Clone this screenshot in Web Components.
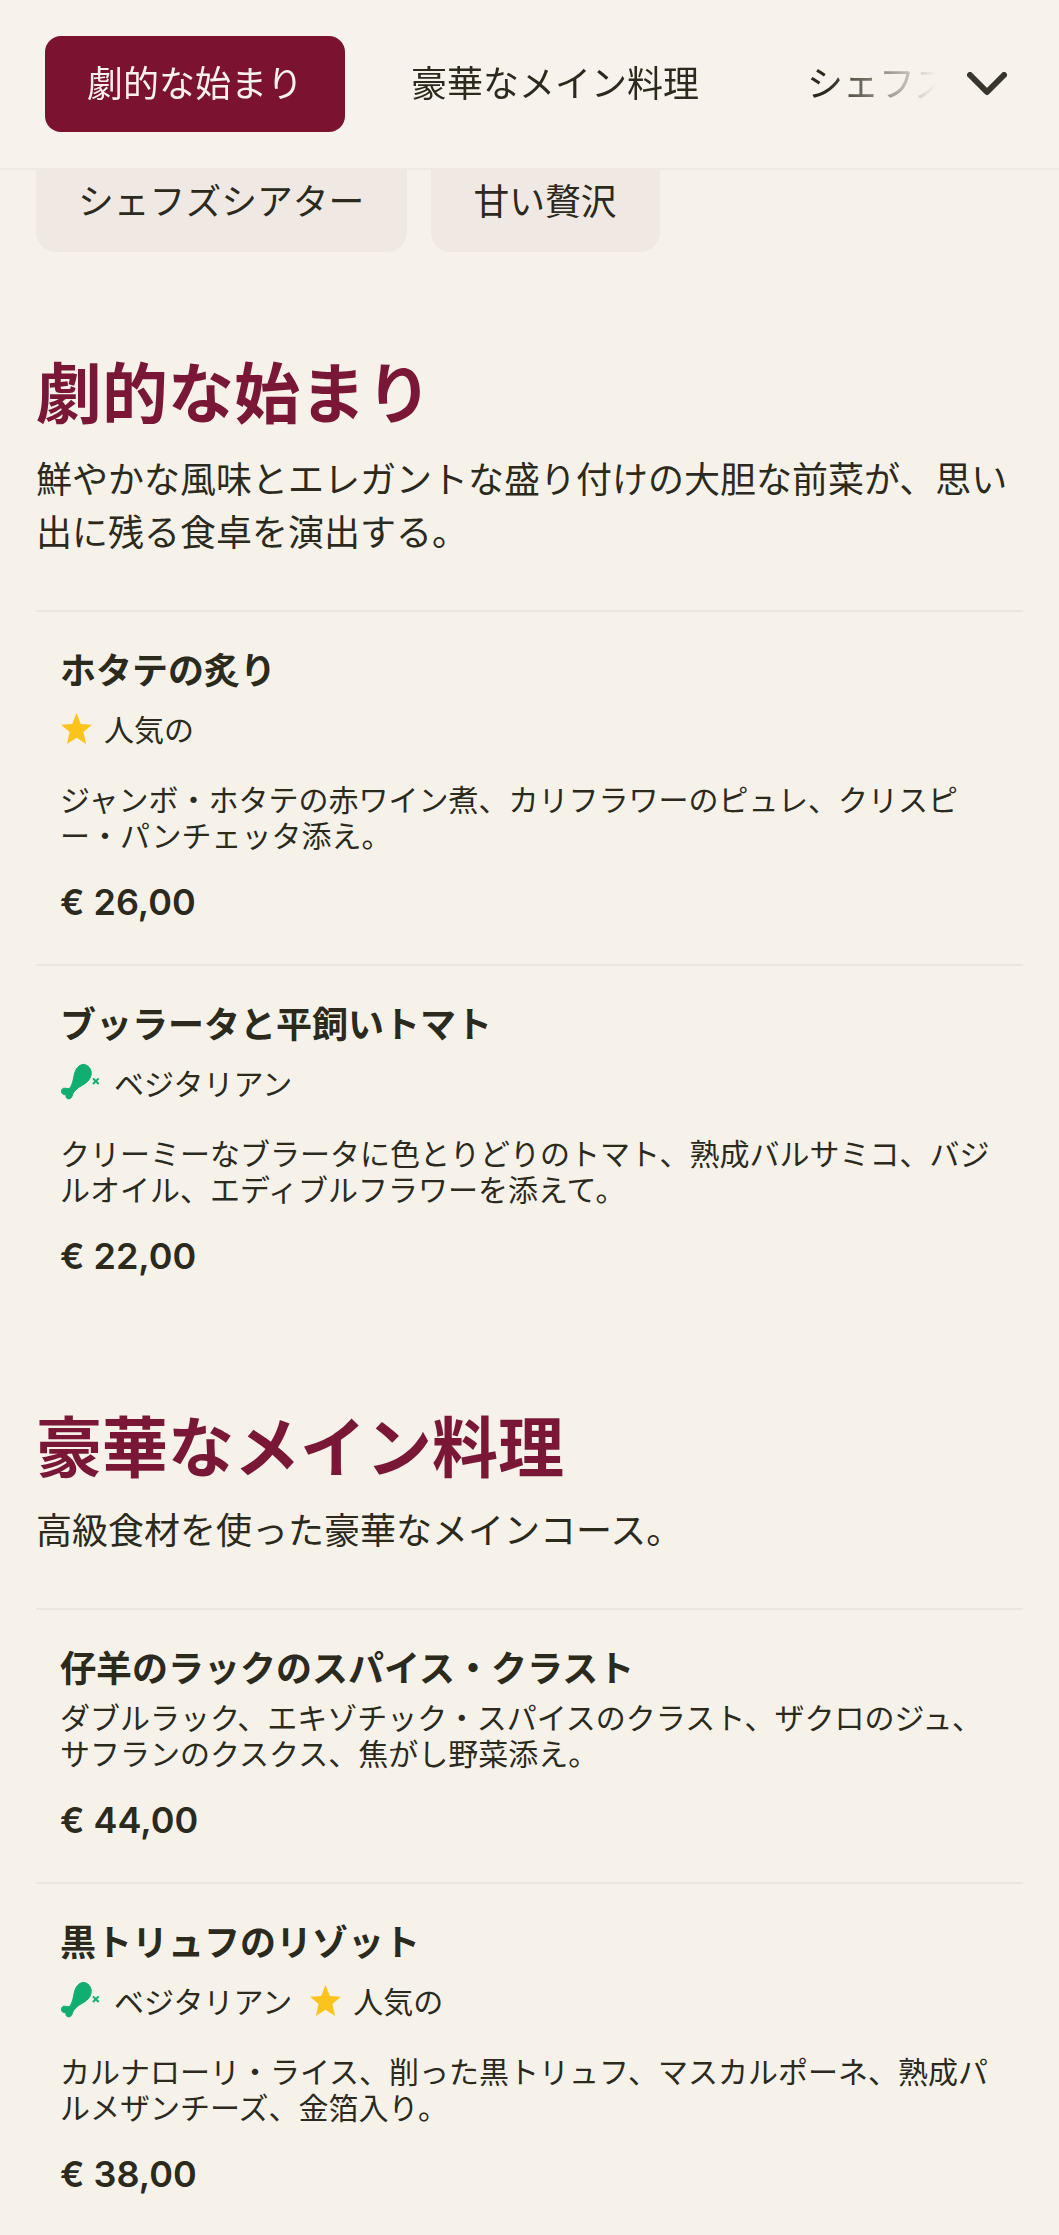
<!DOCTYPE html>
<html lang="ja">
<head>
<meta charset="utf-8">
<title>Menu</title>
<style>
  html, body { margin: 0; padding: 0; height: 2235px; overflow: hidden; background: #f6f2ea; }
  body { font-family: "Noto Sans CJK JP", "Noto Sans", sans-serif; color: #2b2a1d; }
</style>
</head>
<body>
<menu-header>
  <menu-tab active>劇的な始まり</menu-tab>
  <menu-tab>豪華なメイン料理</menu-tab>
  <menu-tab>シェフズシアター</menu-tab>
  <menu-tab>甘い贅沢</menu-tab>
</menu-header>
<menu-overflow>
  <menu-pill>シェフズシアター</menu-pill>
  <menu-pill>甘い贅沢</menu-pill>
</menu-overflow>

<menu-section heading="劇的な始まり">
  <span slot="intro">鮮やかな風味とエレガントな盛り付けの大胆な前菜が、思い<br>出に残る食卓を演出する。</span>
  <menu-item name="ホタテの炙り" price="€ 26,00">
    <menu-tag slot="tags" icon="star">人気の</menu-tag>
    ジャンボ・ホタテの赤ワイン煮、カリフラワーのピュレ、クリスピ<br>ー・パンチェッタ添え。
  </menu-item>
  <menu-item name="ブッラータと平飼いトマト" price="€ 22,00">
    <menu-tag slot="tags" icon="veg">ベジタリアン</menu-tag>
    クリーミーなブラータに色とりどりのトマト、熟成バルサミコ、バジ<br>ルオイル、エディブルフラワーを添えて。
  </menu-item>
</menu-section>

<menu-section heading="豪華なメイン料理" class="second">
  <span slot="intro">高級食材を使った豪華なメインコース。</span>
  <menu-item name="仔羊のラックのスパイス・クラスト" price="€ 44,00">
    ダブルラック、エキゾチック・スパイスのクラスト、ザクロのジュ、<br>サフランのクスクス、焦がし野菜添え。
  </menu-item>
  <menu-item name="黒トリュフのリゾット" price="€ 38,00">
    <menu-tag slot="tags" icon="veg">ベジタリアン</menu-tag>
    <menu-tag slot="tags" icon="star">人気の</menu-tag>
    カルナローリ・ライス、削った黒トリュフ、マスカルポーネ、熟成パ<br>ルメザンチーズ、金箔入り。
  </menu-item>
</menu-section>

<script>
class MenuHeader extends HTMLElement {
  constructor() {
    super();
    this.attachShadow({ mode: 'open' });
    this.shadowRoot.innerHTML = `
      <style>
        :host {
          display: flex;
          align-items: center;
          position: relative;
          z-index: 2;
          box-sizing: border-box;
          height: 170px;
          padding: 0 52px 0 45px;
          background: #f7f3ec;
          border-bottom: 2px solid #eeeae3;
        }
        #tabs {
          flex: 1;
          min-width: 0;
          display: flex;
          gap: 24px;
          overflow: hidden;
          -webkit-mask-image: linear-gradient(to right, #000 87%, transparent 99%);
          mask-image: linear-gradient(to right, #000 87%, transparent 99%);
        }
        svg { flex: none; width: 40px; height: 24px; margin-left: 22px; }
      </style>
      <div id="tabs"><slot></slot></div>
      <svg viewBox="0 0 40 24" fill="none" stroke="#38352a" stroke-width="6" stroke-linecap="round" stroke-linejoin="round">
        <path d="M3 3 L20 20 L37 3"/>
      </svg>
    `;
  }
}

class MenuTab extends HTMLElement {
  constructor() {
    super();
    this.attachShadow({ mode: 'open' });
    this.shadowRoot.innerHTML = `
      <style>
        :host {
          flex: none;
          display: block;
          box-sizing: border-box;
          height: 96px;
          line-height: 90px;
          padding: 0 42px;
          border-radius: 16px;
          font-size: 36px;
          white-space: nowrap;
          color: #2b2a1d;
        }
        :host([active]) { background: #7a1230; color: #f9f1ec; }
      </style>
      <slot></slot>
    `;
  }
}

class MenuOverflow extends HTMLElement {
  constructor() {
    super();
    this.attachShadow({ mode: 'open' });
    this.shadowRoot.innerHTML = `
      <style>
        :host {
          display: flex;
          gap: 24px;
          padding: 0 36px;
          margin-top: -30px;
        }
      </style>
      <slot></slot>
    `;
  }
}

class MenuPill extends HTMLElement {
  constructor() {
    super();
    this.attachShadow({ mode: 'open' });
    this.shadowRoot.innerHTML = `
      <style>
        :host {
          display: block;
          box-sizing: border-box;
          height: 112px;
          padding: 33px 43px 0 42px;
          line-height: 52px;
          border-radius: 20px;
          background: #f0e9e3;
          font-size: 35.8px;
          white-space: nowrap;
        }
      </style>
      <slot></slot>
    `;
  }
}

class MenuSection extends HTMLElement {
  constructor() {
    super();
    this.attachShadow({ mode: 'open' });
    this.shadowRoot.innerHTML = `
      <style>
        :host { display: block; padding: 93px 36px 0; }
        :host(.second) { padding-top: 81px; }
        h2 {
          margin: 0;
          font-size: 66px;
          line-height: 88px;
          font-weight: 700;
          color: #7a1636;
        }
        p {
          margin: 18px 0 0;
          font-size: 36px;
          line-height: 53px;
        }
        :host(.second) p { margin-top: 15px; }
        #items { margin-top: 53px; }
      </style>
      <h2></h2>
      <p><slot name="intro"></slot></p>
      <div id="items"><slot></slot></div>
    `;
    this.shadowRoot.querySelector('h2').textContent = this.getAttribute('heading');
  }
}

class MenuItem extends HTMLElement {
  constructor() {
    super();
    this.attachShadow({ mode: 'open' });
    this.shadowRoot.innerHTML = `
      <style>
        :host {
          display: block;
          padding: 31px 24px 37px;
          border-top: 2px solid #ebe6de;
        }
        h3 {
          margin: 0;
          font-size: 36px;
          line-height: 50px;
          font-weight: 700;
        }
        #tags { display: flex; gap: 17px; margin-top: 13px; margin-bottom: 30px; }
        #tags.empty { margin: 7px 0 0; }
        #desc { font-size: 30px; line-height: 36px; }
        #price {
          margin-top: 25px;
          font-family: Inter, "Noto Sans", sans-serif;
          font-size: 36px;
          line-height: 50px;
          font-weight: 600;
        }
      </style>
      <h3></h3>
      <div id="tags"><slot name="tags"></slot></div>
      <div id="desc"><slot></slot></div>
      <div id="price"></div>
    `;
    this.shadowRoot.querySelector('h3').textContent = this.getAttribute('name');
    this.shadowRoot.querySelector('#price').textContent = this.getAttribute('price');
    if (!this.querySelector('[slot=tags]')) {
      this.shadowRoot.querySelector('#tags').classList.add('empty');
    }
  }
}

const ICONS = {
  star: `<svg width="33" height="33" viewBox="0 0 32 32"><path fill="#fbc31c" d="M16 1 L20.2 11.6 L31 12.3 L22.7 19.5 L25.3 31 L16 24.9 L6.7 31 L9.3 19.5 L1 12.3 L11.8 11.6 Z"/></svg>`,
  veg: `<svg width="43" height="39" viewBox="15 18 129 117"><path fill="#10ae6f" stroke="#10ae6f" stroke-width="3" stroke-linejoin="round" d="M85 22 C70 24 62 36 58 52 C55 68 52 82 46 92 C40 98 32 92 25 94 C16 98 18 112 28 113 C32 113 34 114 33 119 C34 128 48 128 51 118 C53 108 60 100 70 92 C82 84 98 78 106 62 C114 44 104 24 85 22 Z"/><path d="M114 64 L131 81 M131 64 L114 81" stroke="#10ae6f" stroke-width="6" fill="none"/></svg>`
};

class MenuTag extends HTMLElement {
  constructor() {
    super();
    this.attachShadow({ mode: 'open' });
    this.shadowRoot.innerHTML = `
      <style>
        :host {
          display: flex;
          align-items: center;
          gap: 11px;
          height: 44px;
          font-size: 30px;
          line-height: 44px;
          white-space: nowrap;
        }
        svg { display: block; flex: none; }
      </style>
      ${ICONS[this.getAttribute('icon')]}
      <slot></slot>
    `;
  }
}

customElements.define('menu-header', MenuHeader);
customElements.define('menu-tab', MenuTab);
customElements.define('menu-overflow', MenuOverflow);
customElements.define('menu-pill', MenuPill);
customElements.define('menu-section', MenuSection);
customElements.define('menu-item', MenuItem);
customElements.define('menu-tag', MenuTag);
</script>
</body>
</html>
